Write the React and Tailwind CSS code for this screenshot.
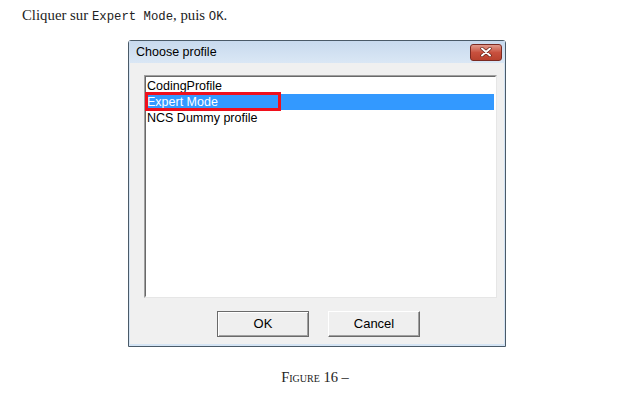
import React from "react";

export default function App() {
  const serif = { fontFamily: '"Liberation Serif", "DejaVu Serif", serif' };
  return (
    <div className="w-[640px] h-[400px] bg-white relative overflow-hidden">
      <div className="flex flex-col">
        <div
          className="pl-[22px] pt-[7px] h-[40px] text-[14.8px] leading-[17px] text-[#222]"
          style={serif}
        >
          Cliquer sur{" "}
          <span className="font-['Liberation_Mono',monospace] text-[12.3px]">Expert Mode</span>, puis{" "}
          <span className="font-['Liberation_Mono',monospace] text-[12.3px]">OK</span>.
        </div>

        <div className="pl-[128px]">
          {/* Dialog */}
          <div className="w-[378px] h-[307px] border border-[#4a5a68] bg-[#d4e4f4] flex flex-col rounded-t-[3px]">
            {/* Title bar */}
            <div className="h-[22px] flex items-center justify-between pl-[7px] pr-[3px] bg-gradient-to-b from-[#c8daee] to-[#dae7f5]">
              <span className="font-['Liberation_Sans',sans-serif] text-[12.5px] text-black">Choose profile</span>
              <div className="w-[32px] h-[17px] rounded-[3px] border border-[#7a2a22] bg-gradient-to-b from-[#e09a8c] via-[#c8503e] to-[#b8422e] flex items-center justify-center">
                <svg width="12" height="10" viewBox="0 0 12 10">
                  <path d="M2 1.5 L10 8.5 M10 1.5 L2 8.5" stroke="#5a1a10" strokeWidth="3.2" strokeLinecap="round" />
                  <path d="M2 1.5 L10 8.5 M10 1.5 L2 8.5" stroke="#ffffff" strokeWidth="2" strokeLinecap="round" />
                </svg>
              </div>
            </div>
            {/* Body */}
            <div className="flex-1 mx-[1px] mb-[2px] bg-[#f0f0f0] flex flex-col pt-[12px] pl-[14px]">
              {/* Listbox */}
              <div className="w-[353px] h-[223px] border-t border-l border-[#a0a0a0] border-r border-b border-r-[#e6e6e6] border-b-[#e6e6e6]">
                <div className="w-full h-full border-t border-l border-[#696969] border-r border-b border-r-white border-b-white bg-white pt-[1px] pl-[1px] pr-[1px] font-['Liberation_Sans',sans-serif] text-[12.5px] leading-[16px] relative">
                  <div className="h-[16px] text-black">CodingProfile</div>
                  <div className="h-[16px] bg-[#3399ff] text-white">Expert Mode</div>
                  <div className="h-[16px] text-black">NCS Dummy profile</div>
                  <div className="absolute left-[-1px] top-[15px] w-[136px] h-[19px] border-[3px] border-[#f0101c]" />
                </div>
              </div>
              {/* Buttons */}
              <div className="flex gap-[19px] pl-[73px] pt-[13px]">
                <button className="w-[92px] h-[26px] border border-[#6a6a6a] bg-[#efefef] shadow-[inset_1px_1px_0_#ffffff,inset_-1px_-1px_0_#a0a0a0] font-['Liberation_Sans',sans-serif] text-[13px] text-black">
                  OK
                </button>
                <button className="w-[92px] h-[26px] border border-t-white border-l-white border-r-[#6a6a6a] border-b-[#6a6a6a] bg-[#efefef] shadow-[inset_-1px_-1px_0_#a0a0a0] font-['Liberation_Sans',sans-serif] text-[13px] text-black">
                  Cancel
                </button>
              </div>
            </div>
          </div>
        </div>

        <div className="pt-[20px] pr-[10px] text-center text-[14.5px] text-[#222]" style={serif}>
          <span className="[font-variant:small-caps]">Figure</span> 16 –
        </div>
      </div>
    </div>
  );
}
